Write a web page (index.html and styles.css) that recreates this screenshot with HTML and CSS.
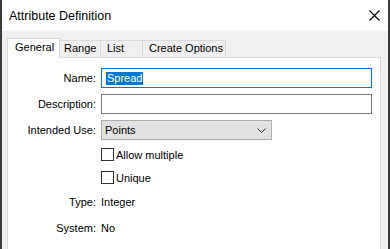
FILE: index.html
```html
<!DOCTYPE html>
<html lang="en">
<head>
    <meta charset="UTF-8">
    <meta name="viewport" content="width=device-width, initial-scale=1.0">
    <title>Attribute Definition</title>
    <link rel="stylesheet" href="styles.css">
</head>
<body>
    <div class="window">
        <div class="titlebar">
            <span class="title">Attribute Definition</span>
            <svg class="close" width="11" height="11" viewBox="0 0 11 11">
                <path d="M0.5 0.5 L10.5 10.5 M10.5 0.5 L0.5 10.5" stroke="#000" stroke-width="1.1" fill="none"/>
            </svg>
        </div>

        <div class="client">
            <div class="tabs">
                <div class="tab selected tab-general">General</div>
                <div class="tab tab-range">Range</div>
                <div class="tab tab-list">List</div>
                <div class="tab tab-create">Create Options</div>
            </div>

            <div class="panel">
                <div class="form">
                    <label class="field-label">Name:</label>
                    <div class="textbox focused"><span class="selection">Spread</span></div>

                    <label class="field-label">Description:</label>
                    <div class="textbox"></div>

                    <label class="field-label">Intended Use:</label>
                    <div class="combo">
                        <span>Points</span>
                        <svg width="9" height="5" viewBox="0 0 9 5">
                            <path d="M0.5 0.5 L4.5 4.5 L8.5 0.5" stroke="#333" stroke-width="1" fill="none"/>
                        </svg>
                    </div>

                    <span></span>
                    <div class="check"><span class="box"></span>Allow multiple</div>

                    <span></span>
                    <div class="check"><span class="box"></span>Unique</div>

                    <label class="field-label">Type:</label>
                    <div class="value">Integer</div>

                    <label class="field-label">System:</label>
                    <div class="value">No</div>
                </div>
            </div>
        </div>
    </div>
</body>
</html>
```

FILE: styles.css
```css
html, body {
    margin: 0;
    padding: 0;
    overflow: hidden;
}

body {
    font-family: "Liberation Sans", Arial, sans-serif;
    font-size: 11px;
    color: #000;
}

.window {
    width: 390px;
    height: 249px;
    box-sizing: border-box;
    border-left: 2px solid #3a3a3a;
    border-right: 2px solid #3a3a3a;
    display: flex;
    flex-direction: column;
    overflow: hidden;
}

.titlebar {
    height: 31px;
    flex-shrink: 0;
    background-color: #fff;
    display: flex;
    align-items: center;
    justify-content: space-between;
    padding: 0 8px 0 7px;
}

.title {
    font-size: 12.5px;
}

.client {
    flex: 1;
    background-color: #f0f0f0;
    padding: 7px 7px 0 5px;
}

/* tab strip */
.tabs {
    display: flex;
    align-items: flex-end;
    height: 19px;
}

.tab {
    box-sizing: border-box;
    height: 17px;
    line-height: 15px;
    border: 1px solid #d9d9d9;
    border-bottom: none;
    margin-left: -1px;
    background-color: #f0f0f0;
    white-space: nowrap;
}

.tab.selected {
    height: 20px;
    line-height: 16px;
    margin-left: 0;
    margin-bottom: -1px;
    background-color: #fff;
    position: relative;
    z-index: 1;
}

.tab-general { width: 53px; padding-left: 7px; }
.tab-range { width: 42px; padding-left: 4px; }
.tab-list { width: 43px; padding-left: 6px; }
.tab-create { width: 84px; padding-left: 6px; }

.panel {
    background-color: #fff;
    border: 1px solid #d9d9d9;
    height: 240px;
    padding: 10px 8px 0 0;
}

.form {
    display: grid;
    grid-template-columns: 88px 1fr;
    grid-template-rows: 20px 20px 20px 17px 17px 20px 20px;
    column-gap: 5px;
    row-gap: 6px;
    align-items: center;
}

.field-label {
    text-align: right;
}

.textbox {
    box-sizing: border-box;
    height: 20px;
    border: 1px solid #7a7a7a;
    background-color: #fff;
    padding-left: 4px;
    display: flex;
    align-items: center;
}

.textbox.focused {
    border-color: #0078d7;
}

.selection {
    background-color: #0078d7;
    color: #fff;
    line-height: 13px;
    padding: 0 1px;
}

.combo {
    box-sizing: border-box;
    width: 171px;
    height: 20px;
    border: 1px solid #adadad;
    background-color: #e1e1e1;
    padding: 0 5px 0 3px;
    display: flex;
    align-items: center;
    justify-content: space-between;
}

.check {
    display: flex;
    align-items: center;
    gap: 2px;
}

.box {
    box-sizing: border-box;
    width: 13px;
    height: 13px;
    border: 1px solid #333;
    background-color: #fff;
}
```
